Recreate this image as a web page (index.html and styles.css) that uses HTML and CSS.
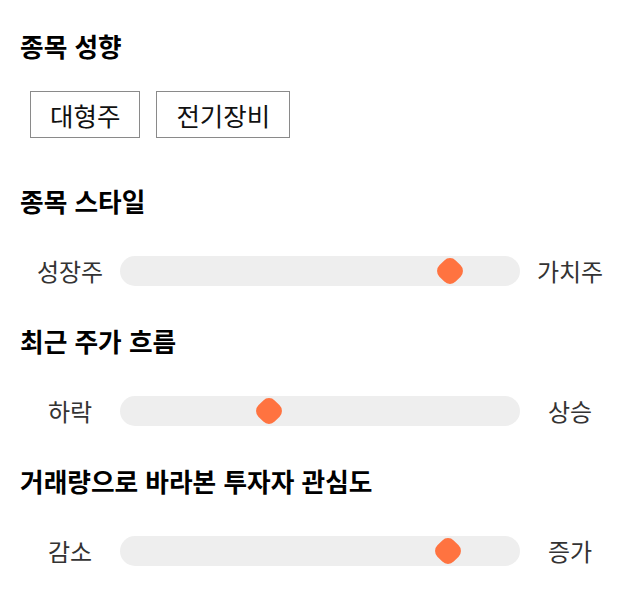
FILE: index.html
```html
<!DOCTYPE html>
<html lang="ko">
<head>
<meta charset="utf-8">
<link rel="stylesheet" href="styles.css">
</head>
<body>
<main class="panel">
  <section class="section">
    <h2 class="title">종목 성향</h2>
    <div class="tags">
      <span class="tag">대형주</span>
      <span class="tag">전기장비</span>
    </div>
  </section>
  <section class="section">
    <h2 class="title">종목 스타일</h2>
    <div class="scale">
      <span class="label">성장주</span>
      <div class="track"><span class="thumb" style="left: 82.4%"></span></div>
      <span class="label">가치주</span>
    </div>
  </section>
  <section class="section">
    <h2 class="title">최근 주가 흐름</h2>
    <div class="scale">
      <span class="label">하락</span>
      <div class="track"><span class="thumb" style="left: 37.2%"></span></div>
      <span class="label">상승</span>
    </div>
  </section>
  <section class="section">
    <h2 class="title">거래량으로 바라본 투자자 관심도</h2>
    <div class="scale">
      <span class="label">감소</span>
      <div class="track"><span class="thumb" style="left: 81.9%"></span></div>
      <span class="label">증가</span>
    </div>
  </section>
</main>
</body>
</html>
```

FILE: styles.css
```css
* { box-sizing: border-box; }
html, body { margin: 0; background: #fff; }
body {
  font-family: "Noto Sans CJK KR", "Noto Sans", sans-serif;
  color: #000;
}
.panel {
  padding: 30px 20px 0 20px;
  display: flex;
  flex-direction: column;
  gap: 39px;
}
.section { display: flex; flex-direction: column; }
.title {
  margin: 0;
  font-size: 25.7px;
  line-height: 32px;
  font-weight: 700;
  color: #000;
}
.tags {
  display: flex;
  gap: 16px;
  margin-top: 29px;
  padding-left: 10px;
}
.tag {
  border: 1px solid #8a8a8a;
  height: 47px;
  padding: 0 19px;
  display: flex;
  align-items: center;
  font-size: 25.5px;
  color: #111;
}
.section:first-child { margin-bottom: 8px; }
.scale {
  margin-top: 39px;
  display: grid;
  grid-template-columns: 100px 1fr 100px;
  align-items: center;
}
.label {
  text-align: center;
  font-size: 24px;
  color: #333;
  line-height: 30px;
}
.track {
  position: relative;
  height: 30px;
  background: #eeeeee;
  border-radius: 15px;
}
.thumb {
  position: absolute;
  top: 50%;
  width: 23px;
  height: 23px;
  background: #ff7340;
  border-radius: 8px;
  transform: translate(-50%, -50%) rotate(45deg);
}
```
